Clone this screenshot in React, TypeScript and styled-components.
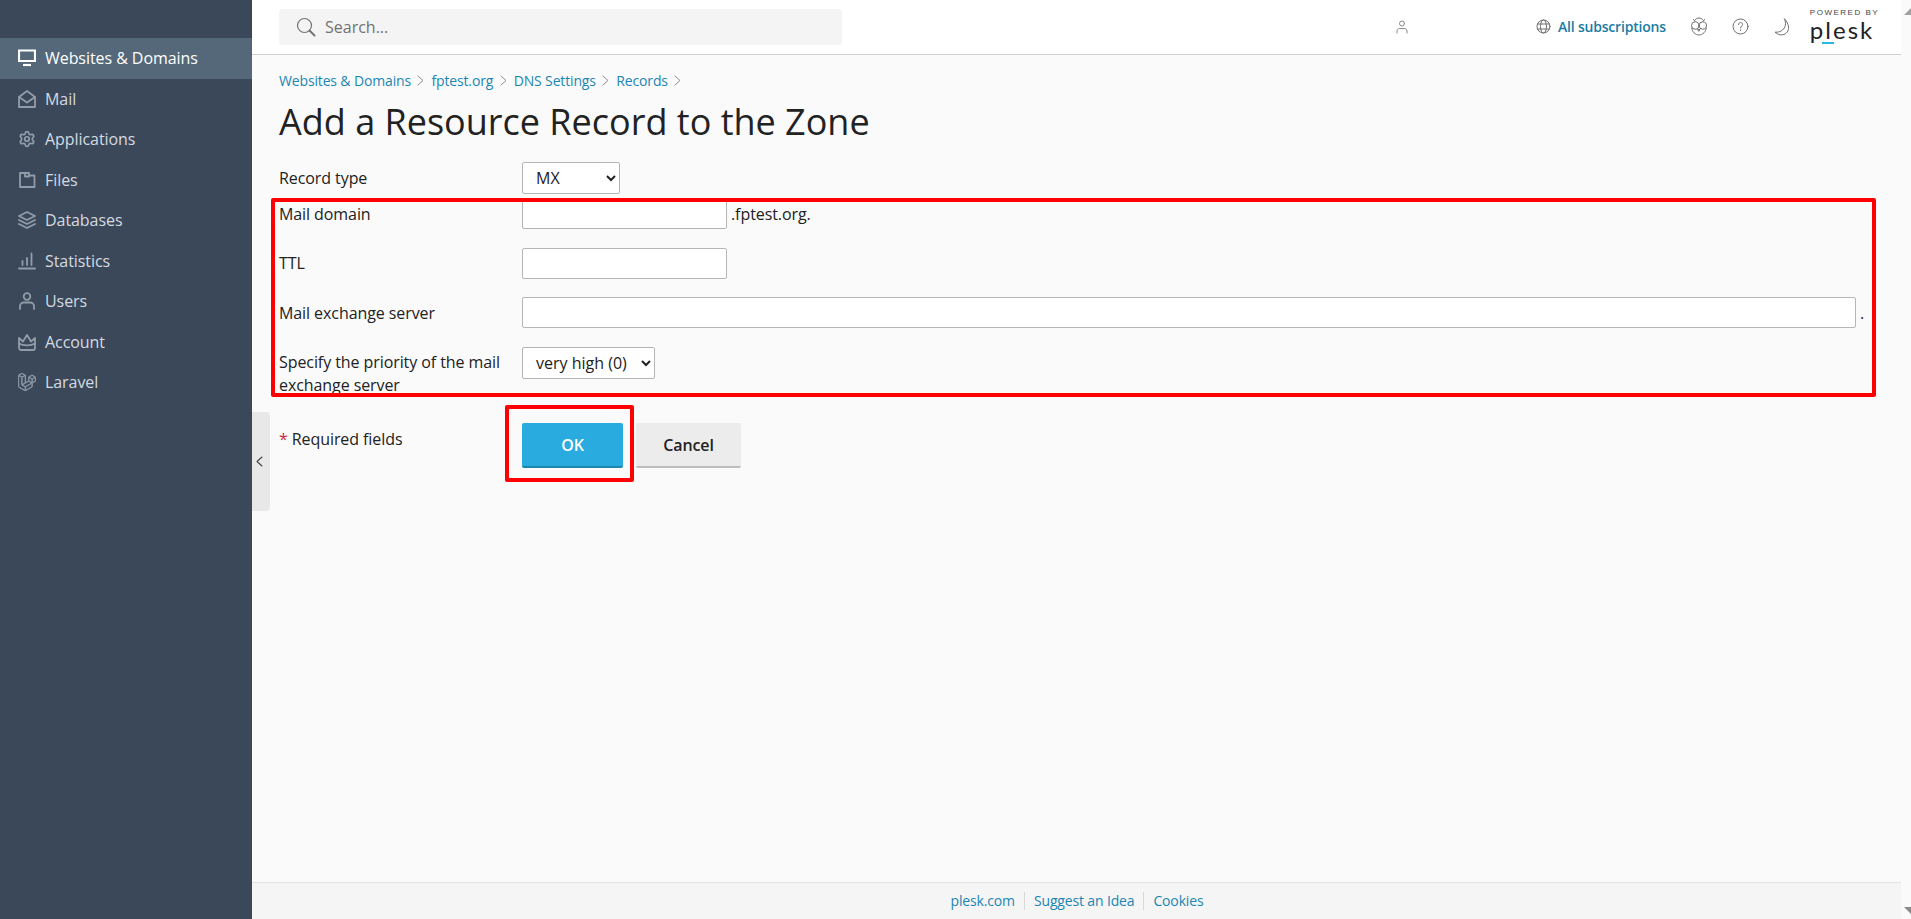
import React from "react";
import styled, { createGlobalStyle } from "styled-components";
import { Settings } from "lucide-react";
import { SiLaravel } from "react-icons/si";

const Global = createGlobalStyle`
  html, body { margin: 0; padding: 0; height: 100%; overflow: hidden; }
  body { font-family: "Open Sans", "Noto Sans", sans-serif; color: #222; background: #fafafa; }
  #root { height: 100%; }
  * { box-sizing: border-box; }
`;

const Page = styled.div`
  display: flex;
  height: 919px;
`;

const Sidebar = styled.nav`
  width: 252px;
  flex: none;
  background: #3a4859;
  padding-top: 38px;
`;

const NavItem = styled.a<{ $active?: boolean }>`
  display: flex;
  align-items: center;
  gap: 9px;
  height: 40.5px;
  padding-left: 18px;
  font-size: 16px;
  letter-spacing: -0.06px;
  color: ${(p) => (p.$active ? "#ffffff" : "#d5dae0")};
  background: ${(p) => (p.$active ? "#546879" : "transparent")};
  svg { flex: none; width: 18px; height: 18px; color: ${(p) => (p.$active ? "#ffffff" : "#919ca8")}; }
`;

const Main = styled.div`
  flex: 1;
  min-width: 0;
  display: flex;
  flex-direction: column;
  position: relative;
`;

const Header = styled.header`
  height: 55px;
  flex: none;
  background: #fff;
  border-bottom: 1px solid #cfcfcf;
  box-shadow: 0 1px 2px rgba(0, 0, 0, 0.08);
  display: flex;
  align-items: center;
  padding: 0 0 1px 27px;
`;

const SearchBox = styled.div`
  width: 563px;
  height: 36px;
  background: #f4f4f4;
  border-radius: 4px;
  display: flex;
  align-items: center;
  gap: 9px;
  padding-left: 17px;
  font-size: 16px;
  color: #737373;
  svg { width: 20px; height: 20px; color: #737373; }
`;

const HeaderIcon = styled.span<{ $left: number; $soft?: boolean }>`
  display: inline-flex;
  margin-left: ${(p) => p.$left}px;
  color: ${(p) => (p.$soft ? "#8a8a8a" : "#6f6f6f")};
  svg { display: block; }
`;

const SubsLink = styled.a`
  margin-left: 7px;
  font-size: 14px;
  font-weight: 600;
  letter-spacing: -0.2px;
  color: #1a7ca3;
  white-space: nowrap;
`;

const LogoBlock = styled.div`
  margin: 0 0 2.5px 20px;
  width: 66px;
  display: flex;
  flex-direction: column;
  align-items: flex-start;
  line-height: 1;
  position: relative;
`;

const PoweredBy = styled.span`
  font-family: "Liberation Sans", sans-serif;
  font-size: 8px;
  line-height: 7px;
  letter-spacing: 1.5px;
  color: #444;
  white-space: nowrap;
`;

const LogoWord = styled.span`
  font-family: "Lato", "Open Sans", sans-serif;
  font-size: 24px;
  font-weight: 400;
  line-height: 24px;
  margin-top: 2.5px;
  color: #222;
  letter-spacing: 2px;
  white-space: nowrap;
`;

const LogoAccent = styled.i`
  position: absolute;
  left: 12px;
  bottom: -2px;
  width: 12px;
  height: 2px;
  background: #28b9e0;
`;

const Content = styled.main`
  flex: 1;
  padding: 16px 36px 0 27px;
  background: #fafafa;
  position: relative;
`;

const Crumbs = styled.div`
  display: flex;
  align-items: center;
  height: 19px;
  font-size: 14px;
  letter-spacing: -0.15px;
  color: #1a86b4;
  svg { margin: 0 7px 0 6.500px; color: #8f8f8f; }
`;

const Title = styled.h1`
  margin: 7px 0 0;
  font-size: 36px;
  line-height: 49px;
  font-weight: 400;
  color: #222;
`;

const Form = styled.form`
  margin-top: 16px;
  letter-spacing: -0.08px;
`;

const Row = styled.div<{ $height: number }>`
  display: flex;
  height: ${(p) => p.$height}px;
`;

const Label = styled.label<{ $top?: number }>`
  width: 243px;
  flex: none;
  font-size: 16px;
  line-height: 23px;
  padding-top: ${(p) => p.$top ?? 0}px;
  color: #222;
`;

const Field = styled.div`
  flex: 1;
  display: flex;
  align-items: flex-start;
  gap: 4px;
  font-size: 16px;
  line-height: 32px;
`;

const Select = styled.select<{ $width: number }>`
  width: ${(p) => p.$width}px;
  height: 32px;
  padding: 0 0 0 9px;
  background: #fff;
  border: 1px solid #b5b5b5;
  border-radius: 2px;
  font-family: inherit;
  font-size: 16px;
  color: #222;
`;

const Input = styled.input<{ $wide?: boolean }>`
  width: ${(p) => (p.$wide ? "1334px" : "205px")};
  height: 31px;
  background: #fff;
  border: 1px solid #b5b5b5;
  border-radius: 2px;
  flex: none;
`;

const Fields = styled.div`
  position: relative;
`;

const RedFrame = styled.div`
  position: absolute;
  border: 4px solid #f00;
  border-radius: 2px;
  pointer-events: none;
`;

const FieldsFrame = styled(RedFrame)`
  left: -8px;
  top: 0;
  width: 1605px;
  height: 199px;
`;

const Actions = styled.div`
  display: flex;
  margin-top: 29px;
`;

const Required = styled.div`
  width: 243px;
  flex: none;
  font-size: 16px;
  line-height: 22px;
  padding-top: 5px;
  b { color: #c0303a; font-weight: 400; }
`;

const Buttons = styled.div`
  display: flex;
  align-items: flex-start;
  gap: 13px;
  position: relative;
`;

const OkFrame = styled(RedFrame)`
  left: -17px;
  top: -18px;
  width: 129px;
  height: 77px;
`;

const Button = styled.button<{ $primary?: boolean }>`
  height: 45px;
  width: ${(p) => (p.$primary ? "101px" : "105px")};
  border: 0;
  border-bottom: 2px solid ${(p) => (p.$primary ? "#1e87ae" : "#bdbdbd")};
  border-radius: 2px;
  background: ${(p) => (p.$primary ? "#29abe0" : "#ececec")};
  color: ${(p) => (p.$primary ? "#fff" : "#222")};
  font-family: inherit;
  font-size: 16px;
  font-weight: 600;
  letter-spacing: -0.1px;
`;

const Collapse = styled.div`
  position: absolute;
  left: 0;
  top: 412px;
  width: 18px;
  height: 99px;
  background: #e8e8e8;
  border-radius: 0 4px 4px 0;
  display: flex;
  align-items: center;
  justify-content: center;
  color: #444;
  padding-right: 4px;
`;

const Footer = styled.footer`
  height: 37px;
  flex: none;
  background: #f5f5f5;
  border-top: 1px solid #e2e2e2;
  display: flex;
  align-items: center;
  justify-content: center;
  font-size: 14px;
  letter-spacing: -0.15px;
  color: #1a86b4;
  padding-right: 9px;
`;

const FooterLink = styled.a`
  padding: 0 9px;
  line-height: 18px;
  & + & { border-left: 1px solid #d9d9d9; }
`;

const Scrollbar = styled.div`
  position: absolute;
  right: 0;
  top: 0;
  bottom: 0;
  width: 10px;
  background: #fafafa;
`;

const ScrollArrow = styled.i`
  position: absolute;
  right: 0;
  top: 8px;
  width: 0;
  height: 0;
  border-left: 7px solid transparent;
  border-bottom: 7px solid #a0a0a0;
`;

const ScrollArrowDown = styled(ScrollArrow)`
  top: auto;
  bottom: 5px;
  border-bottom: 0;
  border-top: 7px solid #8a8a8a;
`;

const s = { fill: "none", stroke: "currentColor", strokeWidth: 1.8, strokeLinecap: "round", strokeLinejoin: "round" } as const;

const Monitor = () => (
  <svg viewBox="0 0 18 18"><path d="M1 1.500h16v10.500H1z" fill="none" stroke="currentColor" strokeWidth="2.200" /><path d="M5 16h8" stroke="currentColor" strokeWidth="2.200" /></svg>
);
const MailIcon = () => (
  <svg viewBox="0 0 18 18" {...s}><path d="M1 7 9 1l8 6v10H1z" /><path d="M1 7l8 5.500L17 7" /></svg>
);
const Gear = () => <Settings strokeWidth={2.3} />;
const Folder = () => (
  <svg viewBox="0 0 18 18" {...s}><path d="M2 2v14h14.500V4.500H11V2zM7 2v3.500h4" /></svg>
);
const Layers = () => (
  <svg viewBox="0 0 18 18" {...s}><path d="M9 1l8 4-8 4-8-4z" /><path d="M1 9l8 4 8-4" /><path d="M1 13l8 4 8-4" /></svg>
);
const Stats = () => (
  <svg viewBox="0 0 18 18" {...s}><path d="M1 16.500h16M4.500 13V9M9 13V6M13.500 13V1.500" /></svg>
);
const User = () => (
  <svg viewBox="0 0 18 18" {...s}><circle cx="9" cy="4.500" r="3.300" /><path d="M2 17v-3c0-2 2-3.500 4-3.500h6c2 0 4 1.500 4 3.500v3" /></svg>
);
const Crown = () => (
  <svg viewBox="0 0 18 18" {...s}><path d="M1 5l4 3.500L9 2l4 6.500L17 5v10c0 1-1 2-2 2H3c-1 0-2-1-2-2z" /><path d="M1 10.500c4 2.500 12 2.500 16 0" /></svg>
);
const Laravel = () => <SiLaravel strokeWidth={0.9} />;
const SearchGlyph = () => (
  <svg viewBox="0 0 20 20" {...s} strokeWidth={1.2}><circle cx="8.500" cy="8.500" r="7" /><path d="M13.500 13.500l5 5" strokeWidth={2} /></svg>
);
const Sep = () => (
  <svg width="7" height="11" viewBox="0 0 7 11" {...s} strokeWidth={1}><path d="M1 1l5 4.500L1 10" /></svg>
);

const items: [string, React.FC][] = [
  ["Websites & Domains", Monitor],
  ["Mail", MailIcon],
  ["Applications", Gear],
  ["Files", Folder],
  ["Databases", Layers],
  ["Statistics", Stats],
  ["Users", User],
  ["Account", Crown],
  ["Laravel", Laravel],
];

export default function App() {
  return (
    <Page>
      <Global />
      <Sidebar>
        {items.map(([label, Icon], i) => (
          <NavItem key={label} $active={i === 0}>
            <Icon />
            {label}
          </NavItem>
        ))}
      </Sidebar>
      <Main>
        <Header>
          <SearchBox>
            <SearchGlyph />
            Search...
          </SearchBox>
          <HeaderIcon $left={554} $soft>
            <svg width="12" height="14" viewBox="0 0 12 14" {...s} strokeWidth={1}><circle cx="6" cy="3.500" r="2.500" /><path d="M1 13v-2c0-1.500 1-2.500 2.500-2.500h5C10 8.500 11 9.500 11 11v2" /></svg>
          </HeaderIcon>
          <HeaderIcon $left={128}>
            <svg width="15" height="15" viewBox="0 0 15 15" {...s} strokeWidth={1}><circle cx="7.500" cy="7.500" r="6.500" /><ellipse cx="7.500" cy="7.500" rx="3" ry="6.500" /><path d="M1.500 5h12M1.500 10h12" /></svg>
          </HeaderIcon>
          <SubsLink>All subscriptions</SubsLink>
          <HeaderIcon $left={24}>
            <svg width="18" height="19" viewBox="0 0 18 19" {...s} strokeWidth={1}><path d="M5 3c1-1.500 2.500-2 4-2s3 .5 4 2" /><path d="M3.500 2.500L5 4.500M14.500 2.500L13 4.500" /><circle cx="5.200" cy="8.500" r="3.700" /><circle cx="12.800" cy="8.500" r="3.700" /><path d="M1.800 11c0 3.500 3.500 7 7.200 7s7.200-3.500 7.200-7" /><path d="M8 12.500h2l-1 1.500z" /></svg>
          </HeaderIcon>
          <HeaderIcon $left={24}>
            <svg width="17" height="17" viewBox="0 0 17 17" {...s} strokeWidth={1}><circle cx="8.500" cy="8.500" r="7.500" /><path d="M6.500 6.500c0-1.200 1-2 2-2s2 .8 2 2c0 1.500-2 1.700-2 3.500M8.500 12v.6" /></svg>
          </HeaderIcon>
          <HeaderIcon $left={25}>
            <svg width="16" height="18" viewBox="0 0 16 18" {...s} strokeWidth={1}><path d="M10.500 1c2 4.500 1 8.500-2 11-2 1.700-4.500 2.400-7.500 2.200C3 16.300 5.800 17.200 8.500 16.800c4-.6 6.500-4 6-8-.4-3-2-6-4-7.800z" /></svg>
          </HeaderIcon>
          <LogoBlock>
            <PoweredBy>POWERED BY</PoweredBy>
            <LogoWord>plesk</LogoWord>
            <LogoAccent />
          </LogoBlock>
        </Header>
        <Content>
          <Crumbs>
            Websites &amp; Domains<Sep />fptest.org<Sep />DNS Settings<Sep />Records<Sep />
          </Crumbs>
          <Title>Add a Resource Record to the Zone</Title>
          <Form>
            <Row $height={36}>
              <Label $top={5}>Record type</Label>
              <Field>
                <Select $width={98} defaultValue="MX"><option>MX</option></Select>
              </Field>
            </Row>
            <Fields>
              <FieldsFrame />
              <Row $height={50}>
                <Label $top={5}>Mail domain</Label>
                <Field><Input />.fptest.org.</Field>
              </Row>
              <Row $height={49}>
                <Label $top={4}>TTL</Label>
                <Field><Input /></Field>
              </Row>
              <Row $height={50}>
                <Label $top={5}>Mail exchange server</Label>
                <Field><Input $wide />.</Field>
              </Row>
              <Row $height={47}>
                <Label $top={4}>Specify the priority of the mail exchange server</Label>
                <Field>
                  <Select $width={133} defaultValue="h"><option value="h">very high (0)</option></Select>
                </Field>
              </Row>
            </Fields>
            <Actions>
              <Required><b>*</b> Required fields</Required>
              <Buttons>
                <OkFrame />
                <Button type="button" $primary>OK</Button>
                <Button type="button">Cancel</Button>
              </Buttons>
            </Actions>
          </Form>
        </Content>
        <Collapse>
          <svg width="7" height="11" viewBox="0 0 7 11" {...s} strokeWidth={1.1}><path d="M6 1L1 5.500 6 10" /></svg>
        </Collapse>
        <Footer>
          <FooterLink>plesk.com</FooterLink>
          <FooterLink>Suggest an Idea</FooterLink>
          <FooterLink>Cookies</FooterLink>
        </Footer>
        <Scrollbar>
          <ScrollArrow />
          <ScrollArrowDown />
        </Scrollbar>
      </Main>
    </Page>
  );
}
